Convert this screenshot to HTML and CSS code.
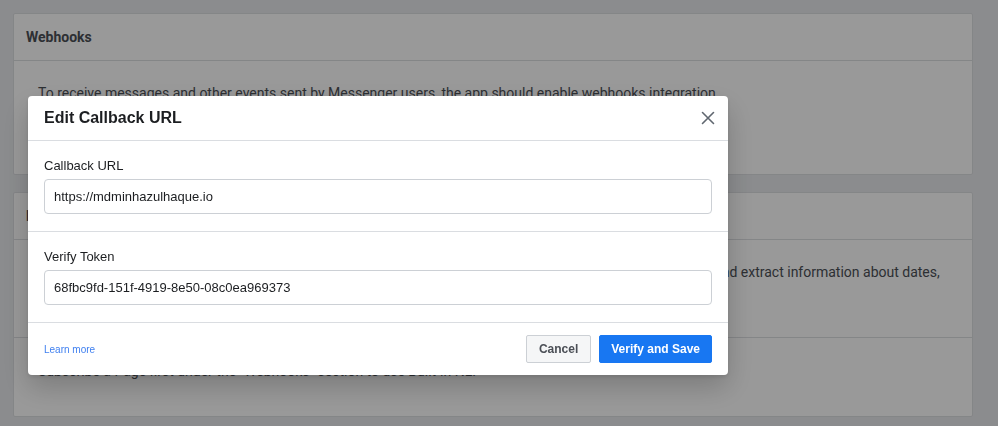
FILE: index.html
```html
<!DOCTYPE html>
<html lang="en">
<head>
<meta charset="utf-8">
<title>Edit Callback URL</title>
<link rel="stylesheet" href="styles.css">
</head>
<body>
<div class="page">
  <section class="card card-webhooks">
    <div class="card-header">Webhooks</div>
    <div class="card-body">
      <p>To receive messages and other events sent by Messenger users, the app should enable webhooks integration.</p>
    </div>
  </section>
  <section class="card card-nlp">
    <div class="card-header">Built-in NLP</div>
    <div class="card-row row-first">
      <p>Built-in NLP helps you automatically detect the meaning of text in messages that people send to your Pages, and extract information about dates,<br>times, locations and other entities.</p>
    </div>
    <div class="card-row row-second">
      <p>Subscribe a Page first under the "Webhooks" section to use Built-in NLP</p>
    </div>
  </section>
</div>

<div class="overlay">
  <div class="modal" role="dialog" aria-label="Edit Callback URL">
    <div class="modal-header">
      <h2 class="modal-title">Edit Callback URL</h2>
      <button class="close-btn" aria-label="Close">
        <svg width="14" height="14" viewBox="0 0 14 14"><path d="M1.5 1.5 L12.5 12.5 M12.5 1.5 L1.5 12.5" stroke="#606770" stroke-width="1.6" stroke-linecap="round" fill="none"/></svg>
      </button>
    </div>
    <div class="field-section">
      <label class="field-label">Callback URL</label>
      <div class="field-input">https://mdminhazulhaque.io</div>
    </div>
    <div class="field-section">
      <label class="field-label">Verify Token</label>
      <div class="field-input">68fbc9fd-151f-4919-8e50-08c0ea969373</div>
    </div>
    <div class="modal-footer">
      <a class="learn-more" href="#">Learn more</a>
      <div class="actions">
        <button class="btn btn-cancel">Cancel</button>
        <button class="btn btn-primary">Verify and Save</button>
      </div>
    </div>
  </div>
</div>
</body>
</html>
```

FILE: styles.css
```css
* { box-sizing: border-box; }

html, body {
  margin: 0;
  padding: 0;
  height: 100%;
  overflow: hidden;
}

body {
  background: #e8eaed;
  font-family: Roboto, "Liberation Sans", sans-serif;
  color: #4b4f56;
}

.page {
  padding: 13px 25px 0 13px;
  display: flex;
  flex-direction: column;
  gap: 17px;
}

.card {
  background: #fff;
  border: 1px solid #dddfe2;
  border-radius: 2px;
}

.card-header {
  height: 47px;
  display: flex;
  align-items: center;
  padding: 0 12px;
  font-size: 14px;
  font-weight: 700;
  color: #4b4f56;
  border-bottom: 1px solid #dddfe2;
}

.card p {
  margin: 0;
  font-size: 14px;
  line-height: 20px;
  color: #4b4f56;
}

.card-webhooks .card-body {
  height: 113px;
  padding: 22px 24px;
}

.card-row {
  padding: 22px 24px;
}

.row-first {
  height: 98px;
  border-bottom: 1px solid #dddfe2;
  padding: 22px 24px 0 26px;
}

.row-second {
  height: 78px;
  padding-top: 23px;
}

.overlay {
  position: fixed;
  inset: 0;
  background: rgba(0, 0, 0, 0.4);
}

.modal {
  position: absolute;
  left: 28px;
  top: 96px;
  width: 700px;
  background: #fff;
  border-radius: 4px;
  box-shadow: 0 12px 28px 0 rgba(0, 0, 0, 0.2), 0 2px 4px 0 rgba(0, 0, 0, 0.1);
  font-family: "Liberation Sans", Arial, sans-serif;
}

.modal-header {
  height: 45px;
  display: flex;
  align-items: center;
  justify-content: space-between;
  padding: 0 12px 0 16px;
  border-bottom: 1px solid #dadde1;
}

.modal-title {
  margin: 0;
  font-size: 16px;
  font-weight: 700;
  color: #1c1e21;
}

.close-btn {
  border: 0;
  background: transparent;
  padding: 0;
  width: 16px;
  height: 16px;
  display: flex;
  align-items: center;
  justify-content: center;
  cursor: pointer;
}

.field-section {
  padding: 17px 16px 17px;
  border-bottom: 1px solid #dadde1;
  display: flex;
  flex-direction: column;
}

.field-label {
  font-size: 13px;
  line-height: 16px;
  color: #1c1e21;
  margin-bottom: 5px;
}

.field-input {
  height: 35px;
  border: 1px solid #ccd0d5;
  border-radius: 4px;
  padding: 0 9px;
  display: flex;
  align-items: center;
  font-size: 13px;
  color: #1c1e21;
}

.modal-footer {
  height: 52px;
  display: flex;
  align-items: center;
  justify-content: space-between;
  padding: 0 16px;
}

.learn-more {
  font-size: 10px;
  color: #4080f0;
  text-decoration: none;
}

.actions {
  display: flex;
  gap: 8px;
}

.btn {
  height: 28px;
  padding: 0 12px;
  border-radius: 2px;
  font-family: "Liberation Sans", Arial, sans-serif;
  font-size: 12px;
  font-weight: 700;
  cursor: pointer;
}

.btn-cancel {
  background: #f5f6f7;
  border: 1px solid #ccd0d5;
  color: #4b4f56;
}

.btn-primary {
  background: #1877f2;
  border: 1px solid #1877f2;
  color: #fff;
  padding: 0 11px;
}
```
